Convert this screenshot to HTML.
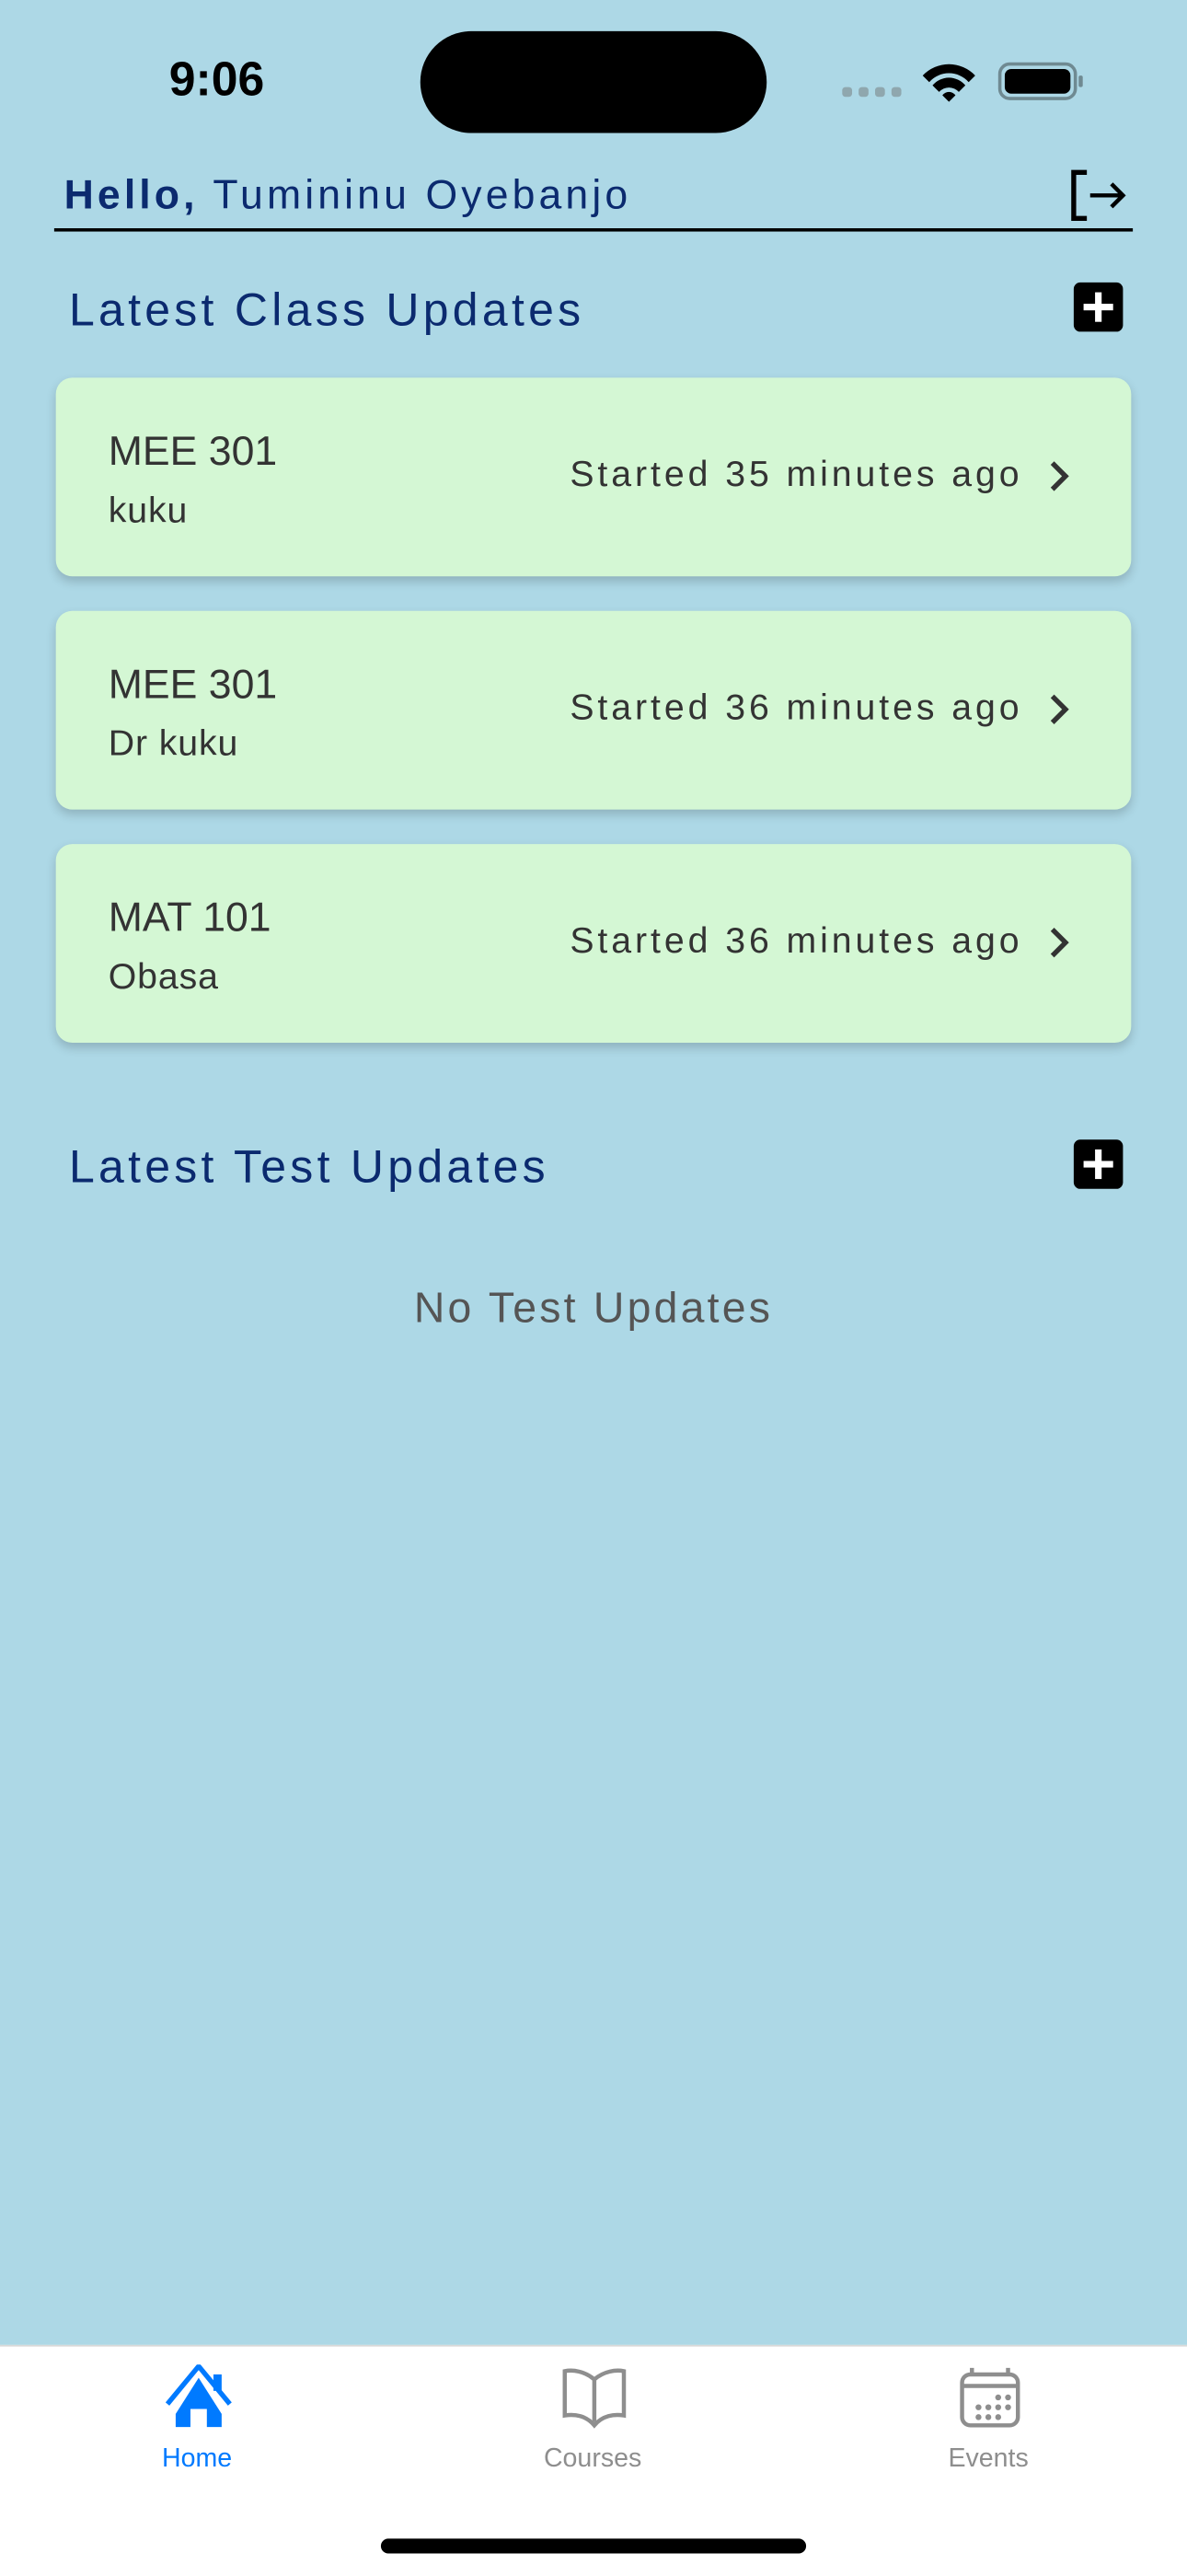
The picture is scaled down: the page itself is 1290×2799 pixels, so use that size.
<!DOCTYPE html>
<html><head><meta charset="utf-8"><style>
html,body{margin:0;padding:0;width:1290px;height:2796px;overflow:hidden;background:#ADD8E6;font-family:"Liberation Sans",sans-serif;}
#w{position:absolute;left:0;top:0;width:723px;height:1568px;transform:scale(1.78423);transform-origin:0 0;}
.a{position:absolute;white-space:nowrap;}
.card{position:absolute;left:34px;width:655px;height:121px;background:#D4F7D4;border-radius:10px;box-shadow:0 3px 6px rgba(0,0,0,0.18);}
.t1{position:absolute;left:32px;top:31px;font-size:25px;color:#333;}
.t2{position:absolute;left:32px;top:68px;font-size:22px;color:#333;letter-spacing:0.5px;}
.t3{position:absolute;right:66px;top:46px;font-size:22px;color:#333;letter-spacing:2.2px;}
.chev{position:absolute;left:604px;top:50px;}
.h{font-size:28px;color:#0B2A6F;letter-spacing:2.4px;}
.plus{position:absolute;width:30px;height:30px;background:#000;border-radius:4px;}
.plus:before{content:"";position:absolute;left:6px;top:13px;width:18px;height:4px;background:#fff;}
.plus:after{content:"";position:absolute;left:13px;top:6px;width:4px;height:18px;background:#fff;}
</style></head><body><div id="w">
<div class="a" style="left:103px;top:33px;font-size:29px;font-weight:bold;color:#000;">9:06</div>
<div class="a" style="left:256px;top:19px;width:211px;height:62px;background:#000;border-radius:31px;"></div>
<svg class="a" style="left:512px;top:36px" width="150" height="28" viewBox="0 0 150 28">
<g fill="#8fa7ae"><rect x="1" y="17" width="6" height="6" rx="2"/><rect x="11" y="17" width="6" height="6" rx="2"/><rect x="21" y="17" width="6" height="6" rx="2"/><rect x="31" y="17" width="6" height="6" rx="2"/></g>
<path d="M50 10 A22 22 0 0 1 82 10 L78 14 A16 16 0 0 0 54 14 Z M56 16 A13 13 0 0 1 76 16 L72 20 A8 8 0 0 0 60 20 Z M62 22 A5 5 0 0 1 70 22 L66 26 Z" fill="#000"/>
<rect x="97" y="3" width="46" height="21" rx="6" fill="none" stroke="#6f8a92" stroke-width="2"/>
<rect x="100" y="6" width="40" height="15" rx="4" fill="#000"/>
<rect x="145" y="10" width="2.5" height="7" rx="1" fill="#6f8a92"/>
</svg>
<div class="a" style="left:39px;top:105px;font-size:25px;color:#0B2A6F;letter-spacing:2.3px;"><b>Hello,</b> Tumininu Oyebanjo</div>
<svg class="a" style="left:650px;top:102px" width="38" height="34" viewBox="0 0 38 34"><path d="M12 3 H4 V31 H12" fill="none" stroke="#000" stroke-width="3"/><path d="M14 17 H34 M27 10 L34 17 L27 24" fill="none" stroke="#000" stroke-width="2.5"/></svg>
<div class="a" style="left:33px;top:139px;width:657px;height:2px;background:#000;"></div>
<div class="a h" style="left:42px;top:173px;">Latest Class Updates</div>
<div class="plus" style="left:654px;top:172px;"></div>

<div class="card" style="top:230px"><div class="t1">MEE 301</div><div class="t2">kuku</div><div class="t3">Started 35 minutes ago</div><svg class="chev" width="14" height="20" viewBox="0 0 14 20"><path d="M3 2 L11 10 L3 18" fill="none" stroke="#333" stroke-width="3"/></svg></div>
<div class="card" style="top:372px"><div class="t1">MEE 301</div><div class="t2">Dr kuku</div><div class="t3">Started 36 minutes ago</div><svg class="chev" width="14" height="20" viewBox="0 0 14 20"><path d="M3 2 L11 10 L3 18" fill="none" stroke="#333" stroke-width="3"/></svg></div>
<div class="card" style="top:514px"><div class="t1">MAT 101</div><div class="t2">Obasa</div><div class="t3">Started 36 minutes ago</div><svg class="chev" width="14" height="20" viewBox="0 0 14 20"><path d="M3 2 L11 10 L3 18" fill="none" stroke="#333" stroke-width="3"/></svg></div>

<div class="a h" style="left:42px;top:695px;">Latest Test Updates</div>
<div class="plus" style="left:654px;top:694px;"></div>
<div class="a" style="left:0;width:723px;text-align:center;top:781px;font-size:26px;color:#555;letter-spacing:1.8px;">No Test Updates</div>

<div class="a" style="left:0;top:1428px;width:723px;height:140px;background:#fff;border-top:1px solid #d8d8d8;"></div>
<svg class="a" style="left:100px;top:1440px" width="42" height="40" viewBox="0 0 42 40"><path d="M21 8 L7 30 V38 H16 V27 H26 V38 H35 V30 Z" fill="#007AFF"/><path d="M2 24 L21 1 L40 24" fill="none" stroke="#007AFF" stroke-width="3"/><rect x="30" y="6" width="5" height="10" fill="#007AFF"/></svg>
<div class="a" style="left:60px;width:120px;text-align:center;top:1489px;font-size:16px;color:#007AFF;">Home</div>
<svg class="a" style="left:341px;top:1441px" width="42" height="38" viewBox="0 0 42 38"><path d="M21 8 C15 3 8 2 3 3 V30 C9 29 16 30 21 36 C26 30 33 29 39 30 V3 C34 2 27 3 21 8 Z M21 8 V34" fill="none" stroke="#8e8e8e" stroke-width="2.5"/></svg>
<div class="a" style="left:301px;width:120px;text-align:center;top:1489px;font-size:16px;color:#8e8e8e;">Courses</div>
<svg class="a" style="left:583px;top:1441px" width="40" height="38" viewBox="0 0 40 38"><rect x="3" y="5" width="34" height="31" rx="5" fill="none" stroke="#8e8e8e" stroke-width="2.5"/><path d="M3 12 H37 M9 1 V6 M31 1 V6" stroke="#8e8e8e" stroke-width="2.5"/><g fill="#8e8e8e"><circle cx="25" cy="19" r="1.8"/><circle cx="31" cy="19" r="1.8"/><circle cx="13" cy="25" r="1.8"/><circle cx="19" cy="25" r="1.8"/><circle cx="25" cy="25" r="1.8"/><circle cx="31" cy="25" r="1.8"/><circle cx="13" cy="31" r="1.8"/><circle cx="19" cy="31" r="1.8"/><circle cx="25" cy="31" r="1.8"/></g></svg>
<div class="a" style="left:542px;width:120px;text-align:center;top:1489px;font-size:16px;color:#8e8e8e;">Events</div>
<div class="a" style="left:232px;top:1546px;width:259px;height:9px;background:#000;border-radius:5px;"></div>
</div></body></html>
